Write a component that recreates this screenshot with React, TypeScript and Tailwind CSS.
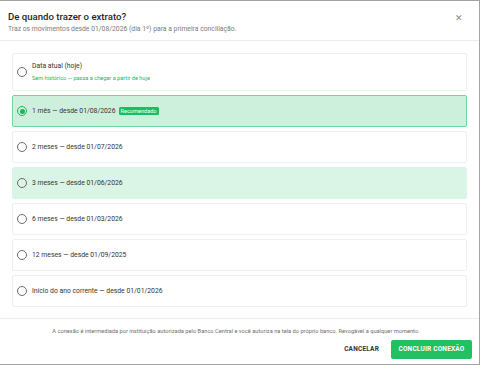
import React from "react";

const options = [
  { label: "Data atual (hoje)", sub: "Sem histórico — passa a chegar a partir de hoje" },
  { label: "1 mês — desde 01/08/2026", badge: "Recomendado", selected: true },
  { label: "2 meses — desde 01/07/2026" },
  { label: "3 meses — desde 01/06/2026", hover: true },
  { label: "6 meses — desde 01/03/2026" },
  { label: "12 meses — desde 01/09/2025" },
  { label: "Início do ano corrente — desde 01/01/2026" },
];

function Radio({ checked }: { checked?: boolean }) {
  if (checked) {
    return (
      <span className="flex h-[10px] w-[10px] shrink-0 items-center justify-center rounded-full border-[1.5px] border-[#16b85a]">
        <span className="h-[5px] w-[5px] rounded-full bg-[#16b85a]" />
      </span>
    );
  }
  return <span className="h-[10px] w-[10px] shrink-0 rounded-full border-[1px] border-[#6b6b6b]" />;
}

export default function App() {
  return (
    <div
      className="h-[365px] w-[480px] overflow-hidden bg-[#a3a3a3] pr-[1px] pt-[1px]"
      style={{ fontFamily: "Roboto, 'Noto Sans', sans-serif" }}
    >
      <div className="flex h-[363px] w-[479px] flex-col bg-white">
        <div className="flex h-[40px] items-start justify-between border-b border-[#ececec] pl-[8px] pr-[16px] pt-[10px]">
          <div>
            <div className="text-[9.6px] font-medium leading-[12px] text-[#1f1f1f]">De quando trazer o extrato?</div>
            <div className="mt-[2px] text-[6.8px] leading-[8px] text-[#7a7a7a]">
              Traz os movimentos desde 01/08/2026 (dia 1º) para a primeira conciliação.
            </div>
          </div>
          <span className="mt-[2px] text-[9px] leading-[10px] text-[#8a8a8a]">✕</span>
        </div>
        <div className="flex flex-1 flex-col gap-[4px] px-[12px] pt-[12px]">
          {options.map((o, i) => (
            <div
              key={i}
              className={
                "flex items-center gap-[5px] rounded-[2px] border pl-[4px] " +
                (o.sub ? "h-[38px] " : "h-[32px] ") +
                (o.selected
                  ? "border-[#6fd69c] bg-[#cdf0dd]"
                  : o.hover
                  ? "border-[#daf4e5] bg-[#daf4e5]"
                  : "border-[#efefef] bg-white")
              }
            >
              <Radio checked={o.selected} />
              <div className="flex flex-col">
                <div className="flex items-center gap-[3px]">
                  <span className="text-[6.8px] leading-[9px] text-[#333]">{o.label}</span>
                  {o.badge && (
                    <span className="rounded-[1.5px] bg-[#17bf5e] px-[2px] text-[5.6px] leading-[8px] text-white">
                      {o.badge}
                    </span>
                  )}
                </div>
                {o.sub && (
                  <span className="mt-[4px] text-[5.6px] leading-[7px] text-[#1fb35c]">{o.sub}</span>
                )}
              </div>
            </div>
          ))}
        </div>
        <div className="flex h-[46px] flex-col border-t border-[#ececec] pr-[7px] pt-[8px]">
          <div className="text-center text-[5.7px] leading-[8px] text-[#6f6f6f]">
            A conexão é intermediada por instituição autorizada pelo Banco Central e você autoriza na tela do próprio banco. Revogável a qualquer momento.
          </div>
          <div className="mt-[5px] flex items-center justify-end gap-[12px]">
            <span className="text-[6.5px] font-bold tracking-[0.2px] text-[#333]">CANCELAR</span>
            <span className="flex h-[19px] w-[81px] items-center justify-center rounded-[2px] bg-[#1fc160] text-[6.5px] font-bold tracking-[0.2px] text-white">
              CONCLUIR CONEXÃO
            </span>
          </div>
        </div>
      </div>
    </div>
  );
}
